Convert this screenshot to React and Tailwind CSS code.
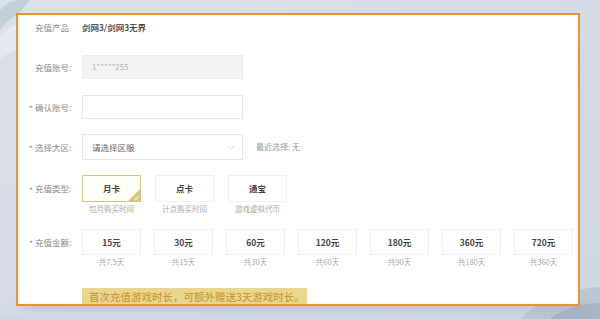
import React from "react";

const font = { fontFamily: '"Noto Sans CJK SC", "Noto Sans", sans-serif' };

function Label({ req, h = 24, children }) {
  return (
    <div
      className="w-[53px] shrink-0 flex items-center text-[8.5px] text-[#8a8a8a] relative pl-[6px]"
      style={{ height: h }}
    >
      {req && <span className="absolute left-0 text-[#999] leading-none top-1/2 -translate-y-[40%]">*</span>}
      <span>{children}</span>
    </div>
  );
}

const types = [
  { t: "月卡", s: "包月购买时间", sel: true },
  { t: "点卡", s: "计点购买时间" },
  { t: "通宝", s: "游戏虚拟代币" },
];

const amounts = [
  ["15元", "共7.5天"],
  ["30元", "共15天"],
  ["60元", "共30天"],
  ["120元", "共60天"],
  ["180元", "共90天"],
  ["360元", "共180天"],
  ["720元", "共360天"],
];

export default function App() {
  return (
    <div
      className="w-[600px] h-[319px] overflow-hidden relative bg-gradient-to-br from-[#d9e1e8] via-[#d3dce5] to-[#cdd7e1]"
      style={font}
    >
      <svg className="absolute left-0 top-0" width="60" height="80" viewBox="0 0 60 80">
        <path d="M0 10 C10 0 20 -2 30 0 L20 12 C12 18 6 22 0 30Z" fill="#b9c7d6" opacity="0.7" />
        <path d="M0 36 C6 30 12 26 18 24 L18 50 C10 52 4 56 0 60Z" fill="#e6ecf2" opacity="0.8" />
      </svg>
      <svg className="absolute right-0 bottom-0" width="110" height="60" viewBox="0 0 110 60">
        <path d="M30 60 C50 40 80 30 110 28 L110 60Z" fill="#aebdcc" opacity="0.6" />
        <path d="M60 60 C75 48 95 44 110 44 L110 60Z" fill="#8fa3b8" opacity="0.5" />
      </svg>
      <div className="absolute left-[22px] top-[300px] w-[560px] h-[10px] bg-[#9aa6b2] opacity-40 blur-[4px]" />

      <div className="relative ml-[16px] mt-[13px] w-[564px] h-[293px] border-2 border-[#e8933a] bg-white overflow-hidden shadow-[inset_0_0_4px_#fff2d9]">
        <div className="pl-[11px] flex flex-col">
          <div className="h-[24px] flex items-center">
            <Label>充值产品</Label>
            <span className="text-[8.5px] text-[#333] font-medium">剑网3/剑网3无界</span>
          </div>

          <div className="mt-[16px] h-[24px] flex">
            <Label>充值账号:</Label>
            <div className="w-[161px] h-[24px] bg-[#f2f3f5] border border-[#eceef1] flex items-center pl-[9px] text-[8px] text-[#b5b5b5]">
              1*****255
            </div>
          </div>

          <div className="mt-[16px] h-[24px] flex">
            <Label req>确认账号:</Label>
            <div className="w-[161px] h-[24px] bg-white border border-[#e6e6e6]" />
          </div>

          <div className="mt-[15px] h-[26px] flex items-center">
            <Label req h={26}>选择大区:</Label>
            <div className="w-[161px] h-[26px] bg-white border border-[#e6e6e6] flex items-center justify-between pl-[9px] pr-[7px]">
              <span className="text-[8.5px] text-[#666]">请选择区服</span>
              <svg width="7" height="5" viewBox="0 0 7 5">
                <path d="M0.5 1 L3.5 4 L6.5 1" fill="none" stroke="#c8c8c8" strokeWidth="0.8" />
              </svg>
            </div>
            <span className="ml-[13px] text-[8px] text-[#999]">最近选择: 无</span>
          </div>

          <div className="mt-[15px] flex items-start">
            <Label req h={27}>充值类型:</Label>
            <div className="flex gap-[14px]">
              {types.map((x) => (
                <div key={x.t} className="flex flex-col items-center w-[59px]">
                  <div
                    className={
                      "relative w-[59px] h-[27px] flex items-center justify-center text-[8.5px] font-semibold text-[#444] overflow-hidden " +
                      (x.sel ? "border border-[#d3c484] bg-[#fffef7]" : "border border-[#f0f0f0] bg-white")
                    }
                  >
                    {x.t}
                    {x.sel && (
                      <svg className="absolute right-0 bottom-0" width="12" height="12" viewBox="0 0 12 12">
                        <path d="M12 0 L12 12 L0 12Z" fill="#d9c77c" />
                        <path d="M6 9 L7.8 10.5 L10.5 7" fill="none" stroke="#fff" strokeWidth="0.9" />
                      </svg>
                    )}
                  </div>
                  <div className="h-[14px] flex items-center text-[7.5px] text-[#a8a8a8] whitespace-nowrap">{x.s}</div>
                </div>
              ))}
            </div>
          </div>

          <div className="mt-[13px] flex items-start">
            <Label req h={26}>充值金额:</Label>
            <div className="flex gap-[13px]">
              {amounts.map(([a, d]) => (
                <div key={a} className="flex flex-col items-center w-[59px]">
                  <div className="w-[59px] h-[26px] border border-[#f0f0f0] bg-white flex items-center justify-center text-[8.5px] font-semibold text-[#444]">
                    {a}
                  </div>
                  <div className="h-[14px] flex items-center text-[7.5px] text-[#a8a8a8] whitespace-nowrap">{d}</div>
                </div>
              ))}
            </div>
          </div>

          <div className="mt-[19px] flex">
            <div className="w-[53px] shrink-0" />
            <div className="w-[225px] h-[20px] bg-[#ead68e] flex items-start pt-[1px] pl-[7px] text-[10.5px] text-[#c9922f] whitespace-nowrap">
              首次充值游戏时长，可额外赠送3天游戏时长。
            </div>
          </div>
        </div>
      </div>
    </div>
  );
}
